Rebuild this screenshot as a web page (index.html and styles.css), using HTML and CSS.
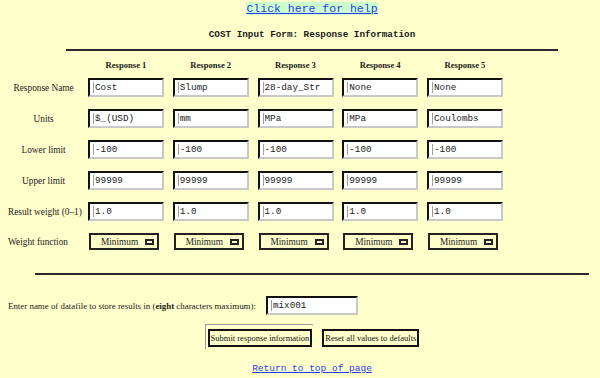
FILE: index.html
```html
<!DOCTYPE html>
<html>
<head>
  <meta charset="utf-8">
  <title>COST Input Form: Response Information</title>
  <link rel="stylesheet" href="styles.css">
</head>
<body>
  <div class="page">
    <a name="top"></a>
    <div class="help"><a href="#">Click here for help</a></div>
    <h1 class="title">COST Input Form: Response Information</h1>
    <hr class="rule rule-top">

    <form class="response-form">
      <div class="grid">
        <div></div>
        <div class="head">Response 1</div>
        <div class="head">Response 2</div>
        <div class="head">Response 3</div>
        <div class="head">Response 4</div>
        <div class="head">Response 5</div>

        <div class="label">Response Name</div>
        <input class="field" type="text" value="Cost">
        <input class="field" type="text" value="Slump">
        <input class="field" type="text" value="28-day_Str">
        <input class="field" type="text" value="None">
        <input class="field" type="text" value="None">

        <div class="label">Units</div>
        <input class="field" type="text" value="$_(USD)">
        <input class="field" type="text" value="mm">
        <input class="field" type="text" value="MPa">
        <input class="field" type="text" value="MPa">
        <input class="field" type="text" value="Coulombs">

        <div class="label">Lower limit</div>
        <input class="field" type="text" value="-100">
        <input class="field" type="text" value="-100">
        <input class="field" type="text" value="-100">
        <input class="field" type="text" value="-100">
        <input class="field" type="text" value="-100">

        <div class="label">Upper limit</div>
        <input class="field" type="text" value="99999">
        <input class="field" type="text" value="99999">
        <input class="field" type="text" value="99999">
        <input class="field" type="text" value="99999">
        <input class="field" type="text" value="99999">

        <div class="label">Result weight (0&ndash;1)</div>
        <input class="field" type="text" value="1.0">
        <input class="field" type="text" value="1.0">
        <input class="field" type="text" value="1.0">
        <input class="field" type="text" value="1.0">
        <input class="field" type="text" value="1.0">

        <div class="label label-left">Weight function</div>
        <span class="select">Minimum<span class="knob"></span></span>
        <span class="select">Minimum<span class="knob"></span></span>
        <span class="select">Minimum<span class="knob"></span></span>
        <span class="select">Minimum<span class="knob"></span></span>
        <span class="select">Minimum<span class="knob"></span></span>
      </div>

      <hr class="rule rule-bottom">

      <div class="datafile">
        <span>Enter name of datafile to store results in (<b>eight</b> characters maximum):</span>
        <input class="field field-file" type="text" value="mix001">
      </div>

      <div class="actions">
        <span class="default-frame"><button class="btn" type="submit">Submit response information</button></span>
        <button class="btn btn-reset" type="reset">Reset all values to defaults</button>
      </div>
    </form>

    <div class="return"><a href="#top">Return to top of page</a></div>
  </div>
</body>
</html>
```

FILE: styles.css
```css
html, body {
  margin: 0;
  background-color: #ffffcc;
  overflow: hidden;
}
body {
  font-family: 'Liberation Serif', 'Times New Roman', serif;
  font-size: 9.3px;
  color: #1a1a1a;
}
.page {
  width: 624px;
  box-sizing: border-box;
  padding: 0 8px;
}
a {
  color: #2a3af0;
}
.help {
  text-align: center;
  margin-top: 2px;
  font-family: 'Liberation Mono', 'Courier New', monospace;
  font-size: 11.5px;
  line-height: 14px;
}
.help a {
  background-color: #ccffcc;
}
.title {
  text-align: center;
  font-family: 'Liberation Mono', 'Courier New', monospace;
  font-size: 9.3px;
  font-weight: bold;
  line-height: 12px;
  margin: 13px 0 0;
}
.rule {
  border: 0;
  height: 2px;
  background-color: #2a2a2a;
  margin: 0 auto;
}
.rule-top {
  width: 492px;
  margin-top: 8px;
}
.rule-bottom {
  width: 554px;
  margin-top: 23px;
}
.response-form {
  margin: 0;
}
.grid {
  display: grid;
  grid-template-columns: 71.25px repeat(5, 76px);
  column-gap: 8.75px;
  row-gap: 12px;
  align-items: center;
  margin-top: 8px;
}
.head {
  text-align: center;
  font-weight: bold;
  font-size: 8.6px;
  line-height: 12px;
  margin-bottom: -5px;
}
.label {
  text-align: center;
  white-space: nowrap;
}
.label-left {
  text-align: left;
}
.field {
  box-sizing: border-box;
  width: 76px;
  height: 19px;
  margin: 0;
  padding: 0 0 0 5px;
  border: 2px solid;
  border-color: #111 #c8c8c8 #c8c8c8 #111;
  background: linear-gradient(#a0a0a0, #a0a0a0) no-repeat 3px 2px / 1px 11px, #fff;
  font-family: 'Liberation Mono', 'Courier New', monospace;
  font-size: 9.3px;
  color: #222;
  outline: none;
}
.select {
  box-sizing: border-box;
  display: inline-flex;
  align-items: center;
  justify-content: space-between;
  width: 70px;
  height: 17px;
  margin-left: 1px;
  padding: 0 3px 0 10px;
  border: 2px solid #222;
}
.knob {
  box-sizing: border-box;
  width: 9px;
  height: 6px;
  border: 2px solid #222;
}
.datafile {
  display: flex;
  align-items: center;
  gap: 10px;
  margin-top: 21px;
  font-size: 8.9px;
}
.field-file {
  width: 92px;
}
.actions {
  display: flex;
  justify-content: center;
  align-items: flex-start;
  gap: 9px;
  margin-top: 9px;
}
.default-frame {
  border-top: 1px solid #9a9a9a;
  border-left: 1px solid #9a9a9a;
  padding: 4px 1px 2px 2px;
}
.btn {
  box-sizing: border-box;
  height: 18px;
  margin: 0;
  padding: 0 1px;
  border: 2px solid #111;
  background-color: #ffffcc;
  font-family: 'Liberation Serif', 'Times New Roman', serif;
  font-size: 8.5px;
  color: #111;
}
.btn-reset {
  margin-top: 5px;
}
.return {
  text-align: center;
  margin-top: 14px;
  font-family: 'Liberation Mono', 'Courier New', monospace;
  font-size: 9.5px;
  line-height: 12px;
}
```
